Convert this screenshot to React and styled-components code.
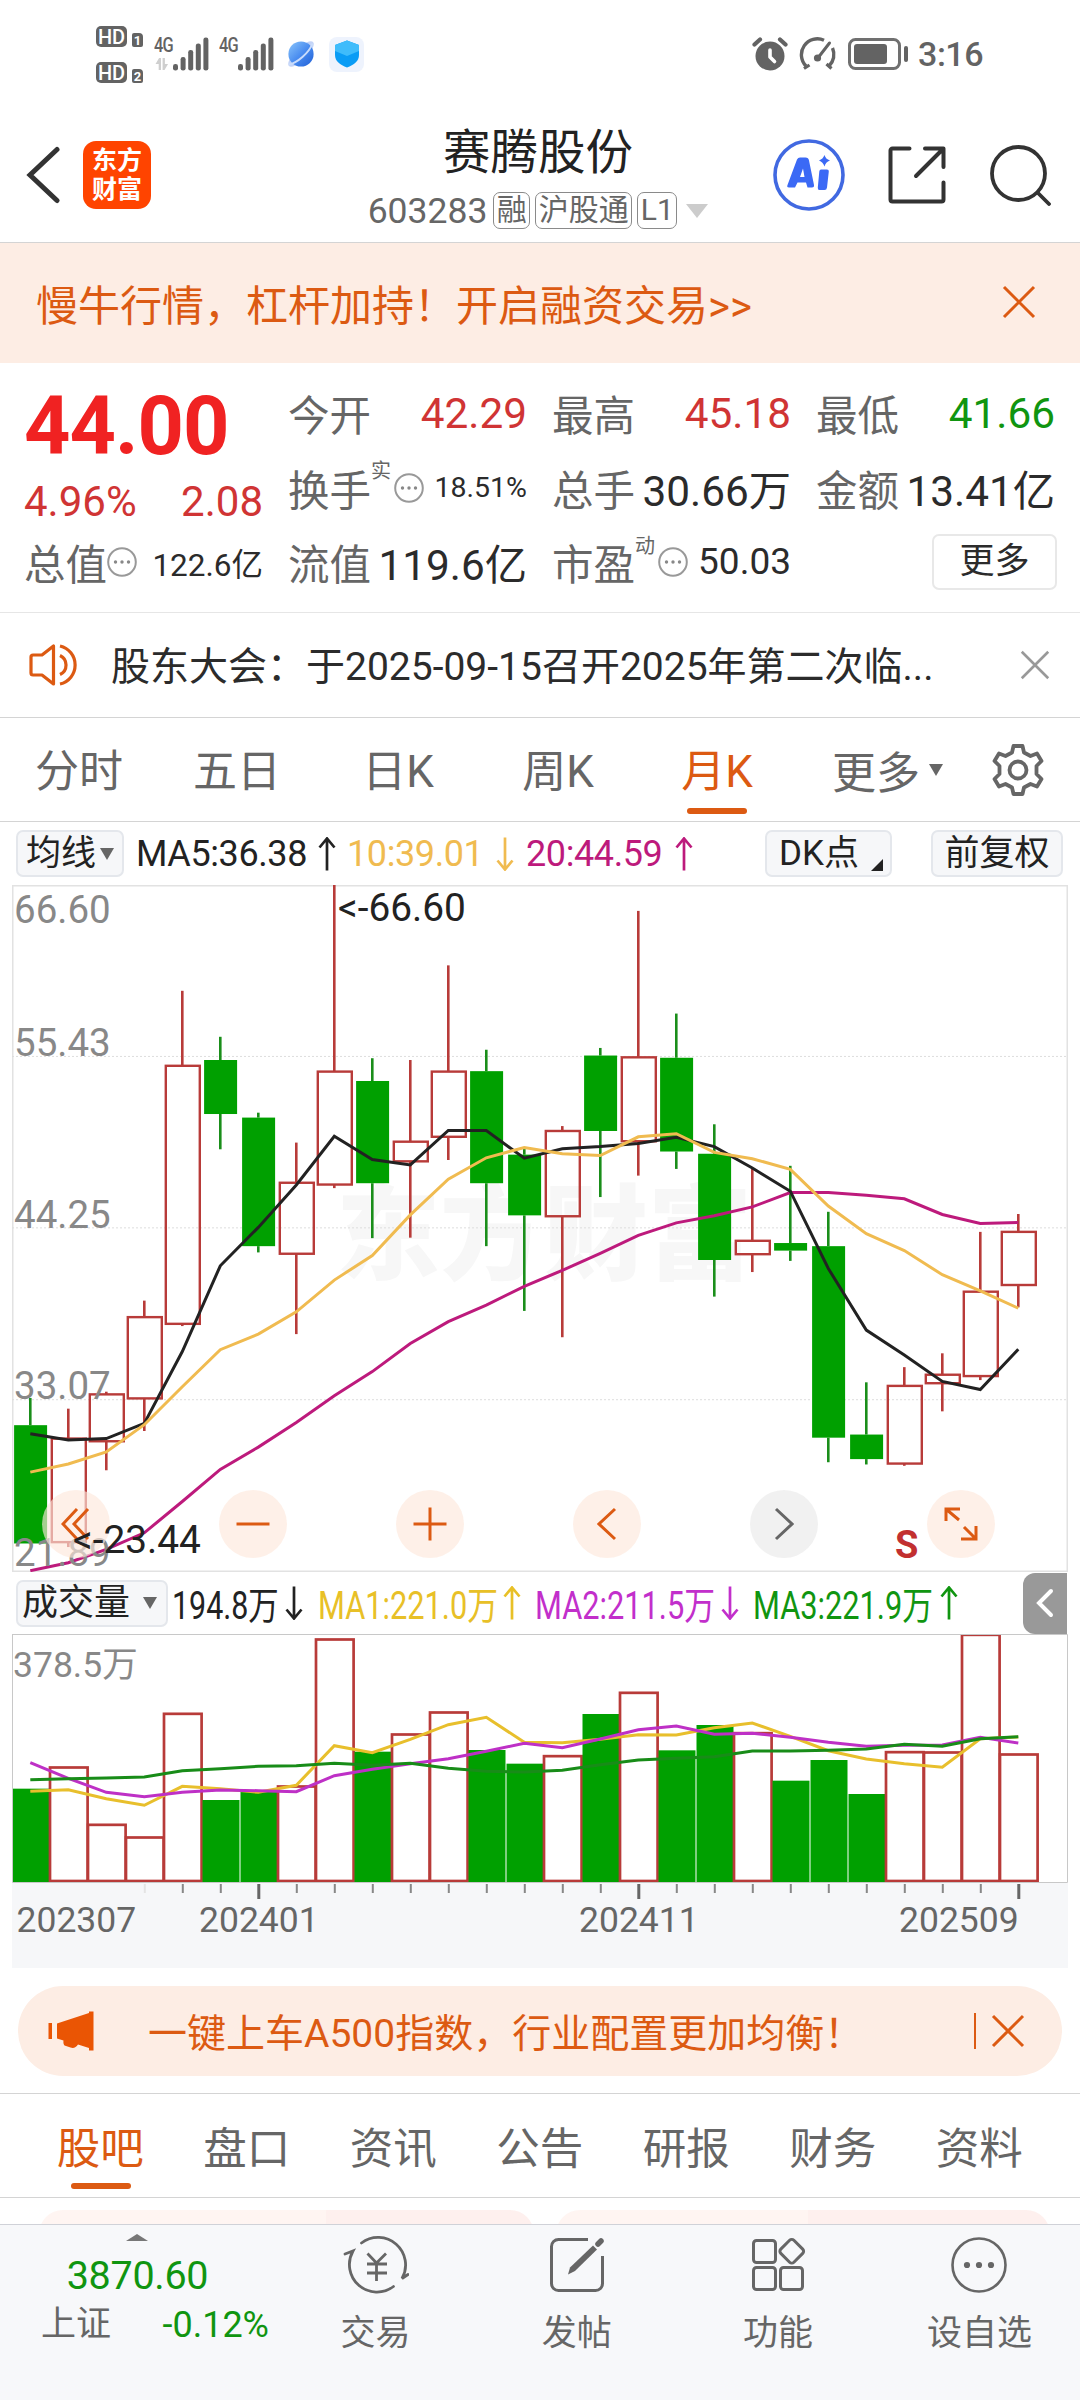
import React from 'react';
import styled, { createGlobalStyle } from 'styled-components';

const ORANGE = '#dc5a12';
const RED = '#d03434';
const GREEN = '#109510';
const GRAY = '#666';

const GlobalStyle = createGlobalStyle`
  * {
    box-sizing: border-box;
  }

  body {
    margin: 0;
    background: #fff;
    font-family: Roboto, "Noto Sans CJK SC", sans-serif;
    color: #2b2b2b;
  }

  svg {
    display: block;
    flex: none;
  }
`;

// x centre of the n-th monthly bar
const barX = (i) => 17.3 + i * 38;
const priceY = (v) => (v - 11) / 2.24;
const volumeY = (v) => (v - 222) / 3;

// [up, high, body top, body bottom, low]
const candles = [
  [0, 1160, 1221, 1486, 1486],
  [1, 1184, 1251, 1483, 1494],
  [1, 1146, 1152, 1257, 1322],
  [1, 942, 979, 1161, 1234],
  [1, 248, 416, 994, 999],
  [0, 351, 403, 524, 603],
  [0, 521, 532, 820, 834],
  [1, 588, 678, 837, 1017],
  [1, 11, 429, 682, 690],
  [0, 399, 450, 679, 802],
  [1, 403, 586, 630, 801],
  [1, 191, 429, 575, 627],
  [0, 380, 428, 679, 820],
  [0, 600, 615, 751, 965],
  [1, 551, 562, 753, 1024],
  [0, 376, 393, 562, 710],
  [1, 69, 397, 585, 662],
  [0, 299, 398, 608, 647],
  [0, 547, 613, 851, 933],
  [1, 645, 808, 838, 878],
  [0, 640, 813, 830, 853],
  [0, 743, 820, 1249, 1304],
  [0, 1125, 1242, 1297, 1309],
  [1, 1091, 1133, 1307, 1312],
  [1, 1060, 1108, 1127, 1190],
  [1, 788, 922, 1111, 1120],
  [1, 748, 788, 907, 957],
];

const ma5 = [1240, 1254, 1251, 1217, 1056, 864, 778, 683, 574, 626, 638, 561, 561, 623, 602, 597, 590, 576, 597, 645, 697, 870, 1008, 1064, 1123, 1141, 1051];
const ma10 = [1326, 1308, 1281, 1220, 1135, 1052, 1017, 967, 896, 841, 750, 670, 622, 599, 613, 617, 575, 568, 610, 624, 648, 730, 792, 830, 884, 920, 959];
const ma20 = [1547, 1529, 1499, 1462, 1392, 1320, 1270, 1215, 1155, 1101, 1038, 989, 952, 910, 874, 836, 796, 768, 752, 732, 700, 700, 706, 714, 749, 769, 767];

const volumes = [686, 621, 793, 831, 460, 720, 693, 678, 237, 575, 522, 456, 570, 611, 587, 462, 397, 571, 495, 518, 662, 600, 702, 575, 576, 223, 582];
const vma1 = [694, 689, 716, 736, 679, 686, 697, 676, 557, 578, 538, 494, 472, 547, 548, 538, 524, 525, 503, 489, 529, 572, 597, 611, 622, 536, 531];
const vma2 = [608, 655, 697, 710, 697, 690, 692, 695, 647, 628, 611, 596, 574, 550, 563, 537, 509, 498, 523, 520, 532, 547, 559, 556, 555, 532, 549];
const vma3 = [659, 656, 654, 651, 632, 626, 619, 617, 610, 616, 610, 625, 634, 636, 631, 614, 600, 595, 590, 573, 573, 571, 567, 553, 559, 536, 530];

const toPoints = (values, scale) =>
  values.map((v, i) => `${barX(i)},${scale(v).toFixed(1)}`).join(' ');

/* ---------- icons ---------- */

const Signal = () => (
  <svg width="36" height="34" viewBox="0 0 36 34" fill="#636363">
    <rect x="0" y="27" width="5" height="6.5" rx="2.3" />
    <rect x="7.6" y="20" width="5" height="13.5" rx="2.3" />
    <rect x="15.2" y="13" width="5" height="20.5" rx="2.3" />
    <rect x="22.8" y="6.5" width="5" height="27" rx="2.3" />
    <rect x="30.4" y="0.5" width="5" height="33" rx="2.3" />
  </svg>
);

const Planet = () => (
  <svg width="30" height="30" viewBox="0 0 30 30">
    <defs>
      <linearGradient id="planet" x1="0" y1="0" x2="1" y2="1">
        <stop offset="0" stopColor="#8cc6fb" />
        <stop offset="0.5" stopColor="#4a8df0" />
        <stop offset="1" stopColor="#1f5fd6" />
      </linearGradient>
    </defs>
    <ellipse cx="15" cy="15" rx="17" ry="6" fill="#c3d3f7" transform="rotate(-45 15 15)" />
    <circle cx="15" cy="15" r="12.6" fill="url(#planet)" />
    <path d="M3 25.5C11 24 23 14 26.5 4.5" fill="none" stroke="#c9dcfb" strokeWidth="2" />
  </svg>
);

const Shield = () => (
  <svg width="26" height="28" viewBox="0 0 26 28">
    <path d="M13 .5 25 5v10c0 6-5 10-12 12.500C6 25 1 21 1 15V5Z" fill="#0a9cf5" />
    <path d="M13 .5 25 5v6L13 16 1 11V5Z" fill="#3fbcfb" />
  </svg>
);

const Alarm = () => (
  <svg width="36" height="34" viewBox="0 0 36 34">
    <circle cx="18" cy="19" r="14.500" fill="#636363" />
    <path d="M2.500 7.500 8 2.500M33.500 7.500 28 2.500" stroke="#636363" strokeWidth="4.200" strokeLinecap="round" />
    <path d="M18 13v7l4.500 4.500" fill="none" stroke="#fff" strokeWidth="3.600" strokeLinecap="round" strokeLinejoin="round" />
  </svg>
);

const Gauge = () => (
  <svg width="38" height="34" viewBox="0 0 38 34" fill="none" stroke="#636363">
    <path d="M7 29A16 16 0 0 1 25 3.200" strokeWidth="3.400" />
    <path d="M33.500 11A16 16 0 0 1 30 29" strokeWidth="3.400" />
    <path d="M5 31.500 10.500 28M32.500 31.500 27.500 27" strokeWidth="3.200" />
    <path d="M18.500 21.500 30.500 6" strokeWidth="3" strokeLinecap="round" />
    <circle cx="18.500" cy="21" r="3.600" fill="#636363" stroke="none" />
  </svg>
);

const Battery = () => (
  <svg width="61" height="32" viewBox="0 0 61 32">
    <rect x="1.500" y="1.500" width="50" height="29" rx="6" fill="none" stroke="#707070" strokeWidth="3" />
    <rect x="6" y="6" width="33" height="20" rx="3" fill="#636363" />
    <rect x="56" y="8" width="4" height="16" rx="2" fill="#636363" />
  </svg>
);

const BackIcon = () => (
  <svg width="36" height="58" viewBox="0 0 36 58" fill="none" stroke="#333" strokeWidth="5">
    <path d="M32 3.500 5 29 32 54.500" strokeLinecap="round" strokeLinejoin="miter" />
  </svg>
);

const AiIcon = () => (
  <svg width="72" height="72" viewBox="0 0 72 72">
    <circle cx="36" cy="36" r="34" fill="none" stroke="#4169e1" strokeWidth="3.600" />
    <path
      fillRule="evenodd"
      d="M24 20.500Q25 18.500 27 18.500H32.500Q35.500 18.500 36 21.500L41 46Q41.300 48.500 39 48.500H34.500L33 43.500H24.500L22 48.500H16Q13.500 48.500 14.500 46ZM27 38H31.500L30 29.500Z"
      fill="#3b69f5"
    />
    <path d="M48 30.500H54Q56 30.500 55.800 32.500L54 48.500Q53.700 51 51.500 51H46.500Q44.500 51 44.800 48.500L46.300 32.500Q46.500 30.500 48 30.500Z" fill="#3b69f5" />
    <path d="M51.500 16Q52.500 20 57 21.500 52.500 23 51.500 27.500 50 23 46 21.500 50 20 51.500 16Z" fill="#3b69f5" />
  </svg>
);

const ShareIcon = () => (
  <svg width="60" height="60" viewBox="0 0 60 60" fill="none" stroke="#333" strokeWidth="4" strokeLinecap="round" strokeLinejoin="round">
    <path d="M22.500 3.500H5.500a2 2 0 0 0-2 2v49a2 2 0 0 0 2 2h49a2 2 0 0 0 2-2V37.500" />
    <path d="M38 3.500h18.500V22M55.500 4.500 29 31" />
  </svg>
);

const SearchIcon = () => (
  <svg width="62" height="62" viewBox="0 0 62 62" fill="none" stroke="#333" strokeWidth="3.800" strokeLinecap="round">
    <circle cx="29.500" cy="29.500" r="26.500" />
    <path d="m49 49 11 11" />
  </svg>
);

const CloseIcon = ({ size = 34, color = ORANGE, width = 3 }) => (
  <svg width={size} height={size} viewBox="0 0 34 34" fill="none" stroke={color} strokeWidth={width}>
    <path d="m2 2 30 30M32 2 2 32" />
  </svg>
);

const InfoDots = () => (
  <svg width="30" height="30" viewBox="0 0 30 30">
    <circle cx="15" cy="15" r="13.800" fill="none" stroke="#999" strokeWidth="2" />
    <g fill="#888">
      <circle cx="8.500" cy="15" r="1.700" />
      <circle cx="15" cy="15" r="1.700" />
      <circle cx="21.500" cy="15" r="1.700" />
    </g>
  </svg>
);

const SpeakerIcon = () => (
  <svg width="54" height="44" viewBox="0 0 54 44" fill="none" stroke={ORANGE} strokeWidth="3.200">
    <path d="M4 12H13L24.500 3V41L13 32H4Q2 32 2 30V14Q2 12 4 12Z" strokeLinejoin="round" />
    <path d="M31 12.500a10.500 10.500 0 0 1 0 19M31 3a19.500 19.500 0 0 1 0 38" />
  </svg>
);

const GearIcon = () => (
  <svg width="54" height="54" viewBox="0 0 54 54" fill="none" stroke={GRAY} strokeWidth="3.800" strokeLinejoin="round">
    <path d="M22.500 3H31.500L33 9.500 39.500 13 46 10.500 50.500 18 45.500 23V31L50.500 36 46 43.500 39.500 41 33 44.500 31.500 51H22.500L21 44.500 14.500 41 8 43.500 3.500 36 8.500 31V23L3.500 18 8 10.500 14.500 13 21 9.500Z" />
    <circle cx="27" cy="27" r="8.500" />
  </svg>
);

const Arrow = ({ down, color }) => (
  <ArrowSvg viewBox="0 0 18 34" stroke={color}>
    <path d={down ? 'M9 .5V32M1.500 23.500 9 32.500 16.500 23.500' : 'M9 33.5V2M1.500 10.500 9 1.500 16.500 10.500'} />
  </ArrowSvg>
);

const Horn = () => (
  <svg width="48" height="40" viewBox="0 0 48 40" fill="#ea5504">
    <rect x="0.500" y="12" width="3.500" height="16" />
    <path d="M9 12.500 41 2V0.500H45.500V39.500H41V37L30 33.500Q27 38 22.500 36.500L16.500 34.500Q15 33.500 15.500 29.500L9 27.500Z" />
  </svg>
);

const TradeIcon = () => (
  <svg width="66" height="60" viewBox="0 0 66 60" fill="none" stroke={GRAY} strokeWidth="2.800" strokeLinecap="round">
    <path d="M18.500 8A27.500 27.500 0 0 1 59 43.500L65 39.500" />
    <path d="M50.500 51.500A27.500 27.500 0 0 1 10 16L2 19" />
    <path d="M24.500 18.500 33.500 28 43 18.500M24 29H44M24 38H44M33.500 28V46" strokeLinecap="butt" />
  </svg>
);

const PostIcon = () => (
  <svg width="56" height="56" viewBox="0 0 56 56" fill="none" stroke={GRAY} strokeWidth="3">
    <path d="M39 2.500H9.500a7 7 0 0 0-7 7V46.500a7 7 0 0 0 7 7H46.500a7 7 0 0 0 7-7V19" />
    <path d="M19 37.500 21 30.500 44 8.500 48 12.500 26 34Z" fill={GRAY} stroke="none" />
    <path d="m49 7 3-3" strokeWidth="5.500" strokeLinecap="round" />
  </svg>
);

const FeatureIcon = () => (
  <svg width="56" height="56" viewBox="0 0 56 56" fill="none" stroke={GRAY} strokeWidth="3">
    <rect x="3.500" y="3.500" width="22" height="22" rx="3" />
    <rect x="3.500" y="30.500" width="22" height="22" rx="3" />
    <rect x="30.500" y="30.500" width="22" height="22" rx="3" />
    <rect x="32.500" y="5" width="18.500" height="18.500" rx="3" transform="rotate(45 41.750 14.250)" />
  </svg>
);

const MoreIcon = () => (
  <svg width="58" height="58" viewBox="0 0 58 58">
    <circle cx="29" cy="29" r="26.500" fill="none" stroke={GRAY} strokeWidth="2.600" />
    <g fill={GRAY}>
      <circle cx="17" cy="29" r="3.100" />
      <circle cx="29" cy="29" r="3.100" />
      <circle cx="41" cy="29" r="3.100" />
    </g>
  </svg>
);

/* ---------- page sections ---------- */

const StatusBar = () => (
  <Status>
    <HdColumn>
      {[1, 2].map((n) => (
        <HdRow key={n}>
          <HdBadge>HD</HdBadge>
          <SimBadge>{n}</SimBadge>
        </HdRow>
      ))}
    </HdColumn>
    <Network>
      <NetworkType>
        4G
        <svg width="20" height="12" viewBox="0 0 16 12" fill="#cfcfcf">
          <path d="M4.500 0H7v12H4V6H0ZM9 0h3v6h4l-4.500 6H9Z" />
        </svg>
      </NetworkType>
      <Signal />
    </Network>
    <Network>
      <NetworkType>4G</NetworkType>
      <Signal />
    </Network>
    <PlanetBox>
      <Planet />
    </PlanetBox>
    <ShieldTile>
      <Shield />
    </ShieldTile>
    <StatusRight>
      <Alarm />
      <Gauge />
      <Battery />
      <Clock>3:16</Clock>
    </StatusRight>
  </Status>
);

const Quote = () => (
  <QuoteGrid>
    <PriceBlock>
      <Price>44.00</Price>
      <Change>
        <span>4.96%</span>
        <span>2.08</span>
      </Change>
    </PriceBlock>
    <Cell>
      <Label>今开</Label>
      <Value $color={RED}>42.29</Value>
    </Cell>
    <Cell>
      <Label>最高</Label>
      <Value $color={RED}>45.18</Value>
    </Cell>
    <Cell>
      <Label>最低</Label>
      <Value $color={GREEN}>41.66</Value>
    </Cell>
    <Cell>
      <Label>换手</Label>
      <Sup>实</Sup>
      <InfoDots />
      <Value $size={28.5}>18.51%</Value>
    </Cell>
    <Cell>
      <Label>总手</Label>
      <Value>30.66万</Value>
    </Cell>
    <Cell>
      <Label>金额</Label>
      <Value>13.41亿</Value>
    </Cell>
    <Cell>
      <Label>总值</Label>
      <InfoDots />
      <Value $size={31.5}>122.6亿</Value>
    </Cell>
    <Cell>
      <Label>流值</Label>
      <Value>119.6亿</Value>
    </Cell>
    <Cell>
      <Label>市盈</Label>
      <Sup>动</Sup>
      <InfoDots />
      <Value $size={37}>50.03</Value>
    </Cell>
    <Cell>
      <MoreButton>更多</MoreButton>
    </Cell>
  </QuoteGrid>
);

const PriceChart = () => (
  <ChartFrame>
    <svg width="1056" height="687" viewBox="-1 0 1056 687">
      <text x="323" y="387" fontSize="104" fontWeight="900" fill="#f7f7f7">东方财富</text>
      {[395, 779, 1164].map((v) => (
        <line key={v} x1="-1" x2="1055" y1={priceY(v)} y2={priceY(v)} stroke="#ddd" strokeDasharray="2 2" />
      ))}
      {candles.map(([up, high, top, bottom, low], i) => {
        const x = barX(i);
        const y = priceY(top);
        const h = priceY(bottom) - y;
        const color = up ? '#b83b39' : '#1a8e1a';
        return (
          <g key={i}>
            <line x1={x} x2={x} y1={priceY(high)} y2={y} stroke={color} strokeWidth="2.600" />
            <line x1={x} x2={x} y1={y + h} y2={priceY(low)} stroke={color} strokeWidth="2.600" />
            {up ? (
              <rect x={x - 16.5} y={y} width="34" height={h} fill="none" stroke={color} strokeWidth="2.400" />
            ) : (
              <rect x={x - 16.2} y={y} width="33" height={h} fill="#00a000" />
            )}
          </g>
        );
      })}
      <g fill="none" strokeWidth="3">
        <polyline points={toPoints(ma20, priceY)} stroke="#bd1a7c" />
        <polyline points={toPoints(ma5, priceY)} stroke="#222" />
        <polyline points={toPoints(ma10, priceY)} stroke="#f0bb50" />
      </g>
      {[[66.6, 38], [55.43, 171], [44.25, 343], [33.07, 514], [21.89, 681]].map(([label, y]) => (
        <text key={y} x="1" y={y} fontSize="38.500" fill="#888">{label.toFixed(2)}</text>
      ))}
      <text x="325" y="36" fontSize="38.800" fill="#222">&lt;-66.60</text>
    </svg>
    <ChartButtons>
      <RoundButton>
        <svg width="30" height="34" viewBox="0 0 30 34">
          <path d="M16 2 2 17 16 32M27 2 13 17 27 32" />
        </svg>
      </RoundButton>
      <RoundButton>
        <svg width="34" height="34" viewBox="0 0 34 34">
          <path d="M.5 17h33" />
        </svg>
      </RoundButton>
      <RoundButton>
        <svg width="34" height="34" viewBox="0 0 34 34">
          <path d="M.5 17h33M17 .5v33" />
        </svg>
      </RoundButton>
      <RoundButton>
        <svg width="20" height="34" viewBox="0 0 20 34">
          <path d="M18 2 2 17 18 32" />
        </svg>
      </RoundButton>
      <RoundButton $muted>
        <svg width="20" height="34" viewBox="0 0 20 34">
          <path d="M2 2 18 17 2 32" />
        </svg>
      </RoundButton>
      <RoundButton>
        <svg width="34" height="34" viewBox="0 0 34 34">
          <path d="M2 14V2H16M2.500 2.500 15 13M20 20 31 31M32 19V32H17" />
        </svg>
      </RoundButton>
    </ChartButtons>
    <LowMark>&lt;-23.44</LowMark>
    <SellMark>S</SellMark>
  </ChartFrame>
);

const VolumeChart = () => (
  <VolumeFrame>
    <svg width="1056" height="334" viewBox="-1 0 1056 334">
      <rect x="-1" y="249" width="1056" height="85" fill="#f6f7f9" />
      <text x="0" y="43" fontSize="35.500" fill="#888">378.5万</text>
      {volumes.map((v, i) => {
        const x = barX(i);
        const y = volumeY(v);
        return candles[i][0] ? (
          <rect key={i} x={x - 18.3} y={y + 0.5} width="37.600" height={246.5 - y} fill="#fff" stroke="#b83b39" strokeWidth="2.700" />
        ) : (
          <rect key={i} x={x - 17.8} y={y} width="37" height={248 - y} fill="#00a000" />
        );
      })}
      <g fill="none" strokeWidth="3">
        <polyline points={toPoints(vma1, volumeY)} stroke="#e8bf2c" />
        <polyline points={toPoints(vma2, volumeY)} stroke="#be30c6" />
        <polyline points={toPoints(vma3, volumeY)} stroke="#188c18" />
      </g>
      <path d="M-1 .5H1054.500V248.500H-.5V0" fill="none" stroke="#c8c8c8" />
      {volumes.map((_, i) => {
        const major = i % 10 === 6;
        return i > 2 && (
          <rect key={i} x={barX(i) - 1 + (major ? 0 : 0.5)} y="250" width={major ? 3 : 2} height={major ? 15 : 9} fill={i === 3 ? '#e4e4e4' : major ? '#666' : '#888'} />
        );
      })}
      <g fontSize="35.500" fill={GRAY}>
        <text x="3.500" y="298">202307</text>
        <text x="186" y="298">202401</text>
        <text x="566" y="298">202411</text>
        <text x="886" y="298">202509</text>
      </g>
    </svg>
  </VolumeFrame>
);

const periods = [
  ['分时', 158],
  ['五日', 158],
  ['日K', 164],
  ['周K', 156],
  ['月K', 162],
];

const navItems = [
  ['交易', TradeIcon],
  ['发帖', PostIcon],
  ['功能', FeatureIcon],
  ['设自选', MoreIcon],
];

export default function App() {
  return (
    <Page>
      <GlobalStyle />
      <StatusBar />
      <Header>
        <BackIcon />
        <Logo>
          东方
          <br />
          财富
        </Logo>
        <TitleBlock>
          <Title>赛腾股份</Title>
          <CodeRow>
            603283
            <Tag $first>融</Tag>
            <Tag>沪股通</Tag>
            <Tag>L1</Tag>
            <Caret $w={23} $h={14} $color="#ccc" $left={9} />
          </CodeRow>
        </TitleBlock>
        <HeaderActions>
          <AiIcon />
          <ShareIcon />
          <SearchIcon />
        </HeaderActions>
      </Header>
      <Banner>
        慢牛行情，杠杆加持！开启融资交易&gt;&gt;
        <CloseIcon />
      </Banner>
      <Quote />
      <Notice>
        <SpeakerIcon />
        <NoticeText>股东大会：于2025-09-15召开2025年第二次临...</NoticeText>
        <CloseIcon size={30} color="#999" />
      </Notice>
      <PeriodTabs>
        {periods.map(([name, width]) => (
          <Period key={name} $width={width} $active={name === '月K'}>
            {name}
          </Period>
        ))}
        <MorePeriods>
          更多
          <Caret $w={15} $h={12} $color={GRAY} $left={9} />
        </MorePeriods>
        <GearIcon />
      </PeriodTabs>
      <MaRow>
        <Chip $width={108}>
          均线
          <Caret $w={15} $h={12} $color={GRAY} $left={4} />
        </Chip>
        <MaText $left={12} $width={182} $color="#222">MA5:36.38</MaText>
        <Arrow color="#222" />
        <MaText $left={11} $width={149} $color="#f0bb50">10:39.01</MaText>
        <Arrow down color="#f0bb50" />
        <MaText $left={12} $width={149} $color="#bd1a7c">20:44.59</MaText>
        <Arrow color="#bd1a7c" />
        <DkChip $width={127}>DK点</DkChip>
        <Chip $width={132}>前复权</Chip>
      </MaRow>
      <PriceChart />
      <VolumeHeader>
        <VolumeChip $width={152}>
          成交量
          <Caret $w={15} $h={12} $color={GRAY} $left={13} />
        </VolumeChip>
        <Narrow $left={4} $width={113} $scale={0.8} $color="#222"><span>194.8万</span></Narrow>
        <Arrow down color="#222" />
        <Narrow $left={15} $width={185} $scale={0.81} $color="#e8c027"><span>MA1:221.0万</span></Narrow>
        <Arrow color="#e8c027" />
        <Narrow $left={14} $width={186} $scale={0.81} $color="#c22fcb"><span>MA2:211.5万</span></Narrow>
        <Arrow down color="#c22fcb" />
        <Narrow $left={14} $width={187} $scale={0.81} $color={GREEN}><span>MA3:221.9万</span></Narrow>
        <Arrow color={GREEN} />
        <Drawer>
          <svg width="18" height="30" viewBox="0 0 18 30" fill="none" stroke="#fff" strokeWidth="4" strokeLinecap="round">
            <path d="M15 3 3 15 15 27" />
          </svg>
        </Drawer>
      </VolumeHeader>
      <VolumeChart />
      <Promo>
        <Horn />
        <PromoText>一键上车A500指数，行业配置更加均衡！</PromoText>
        <PromoClose>
          <CloseIcon />
        </PromoClose>
      </Promo>
      <InfoTabs>
        {['股吧', '盘口', '资讯', '公告', '研报', '财务', '资料'].map((name, i) => (
          <InfoTab key={name} $active={i === 0}>
            {name}
          </InfoTab>
        ))}
      </InfoTabs>
      <Cards>
        <Card $split={58} />
        <Card $split={51} />
      </Cards>
      <BottomNav>
        <IndexBlock>
          <IndexCaret />
          <IndexValue>3870.60</IndexValue>
          <IndexRow>
            <span>上证</span>
            <IndexChange>-0.12%</IndexChange>
          </IndexRow>
        </IndexBlock>
        {navItems.map(([name, Icon]) => (
          <NavItem key={name}>
            <IconBox>
              <Icon />
            </IconBox>
            {name}
          </NavItem>
        ))}
      </BottomNav>
    </Page>
  );
}

/* ---------- styles ---------- */

const Page = styled.div`
  width: 1080px;
  height: 2400px;
  overflow: hidden;
  display: flex;
  flex-direction: column;
  background: #fff;

  > * {
    flex: none;
  }
`;

const Status = styled.div`
  display: flex;
  align-items: center;
  height: 108px;
  padding: 0 97px 0 96px;
  color: #636363;
`;

const HdColumn = styled.div`
  display: flex;
  flex-direction: column;
  gap: 15px;
  width: 58px;
  margin-top: 1px;
`;

const HdRow = styled.div`
  display: flex;
  align-items: flex-end;
  gap: 5px;
`;

const HdBadge = styled.div`
  width: 31px;
  height: 21px;
  border-radius: 5px;
  background: #636363;
  color: #fff;
  font-size: 20px;
  font-weight: 500;
  line-height: 22px;
  text-align: center;
`;

const SimBadge = styled.div`
  width: 11px;
  height: 14px;
  border-radius: 2px 4px 2px 2px;
  background: #636363;
  color: #fff;
  font-size: 13px;
  font-weight: 700;
  line-height: 15px;
  text-align: center;
`;

const Network = styled.div`
  display: flex;
  width: 65px;
`;

const NetworkType = styled.div`
  width: 19px;
  height: 34px;
  font-size: 21px;
  font-weight: 500;
  line-height: 17px;
  letter-spacing: -1px;
  transform: scaleX(0.78);
  transform-origin: left;

  svg {
    margin-top: 4px;
  }
`;

const PlanetBox = styled.div`
  margin-left: 2px;
`;

const ShieldTile = styled.div`
  display: flex;
  align-items: center;
  justify-content: center;
  width: 35px;
  height: 35px;
  margin-left: 13px;
  border-radius: 8px;
  background: #eef3fd;
`;

const StatusRight = styled.div`
  display: flex;
  align-items: center;
  gap: 11px;
  margin-left: auto;
`;

const Clock = styled.div`
  font-size: 34px;
  font-weight: 500;
  margin-left: -2px;
  line-height: 40px;
  letter-spacing: -0.5px;
`;

const Header = styled.div`
  display: flex;
  align-items: center;
  height: 135px;
  padding: 0 29px 0 25px;
  border-bottom: 1px solid #d4d4d4;
`;

const Logo = styled.div`
  width: 68px;
  height: 68px;
  margin-left: 22px;
  padding-top: 5px;
  border-radius: 13px;
  background: #ff4400;
  color: #fff;
  font-size: 25px;
  font-weight: 700;
  line-height: 29px;
  text-align: center;
`;

const TitleBlock = styled.div`
  display: flex;
  flex-direction: column;
  align-items: center;
  width: 342px;
  margin: 9px 0 0 216px;
`;

const Title = styled.div`
  font-size: 47.5px;
  line-height: 62px;
  color: #222;
`;

const CodeRow = styled.div`
  display: flex;
  align-items: center;
  font-size: 35.5px;
  line-height: 54px;
  color: ${GRAY};
`;

const Tag = styled.span`
  height: 37px;
  margin-left: ${({ $first }) => ($first ? 6 : 5)}px;
  padding: 0 2.5px;
  border: 1.5px solid #8a8a8a;
  border-radius: 7px;
  font-size: 30px;
  line-height: 34px;
`;

const Caret = styled.span`
  width: 0;
  height: 0;
  margin-left: ${({ $left }) => $left}px;
  border: solid transparent;
  border-width: ${({ $w, $h }) => `${$h}px ${$w / 2}px 0`};
  border-top-color: ${({ $color }) => $color};
`;

const HeaderActions = styled.div`
  display: flex;
  align-items: center;
  gap: 42px;
  margin-left: auto;
`;

const Banner = styled.div`
  display: flex;
  align-items: center;
  justify-content: space-between;
  height: 120px;
  padding: 0 44px 2px 36px;
  background: #fdede4;
  color: ${ORANGE};
  font-size: 42px;
`;

const QuoteGrid = styled.div`
  display: grid;
  grid-template-columns: repeat(4, 239px);
  grid-template-rows: 74px 75px 73px;
  column-gap: 25px;
  height: 250px;
  padding: 13px 0 0 24px;
  border-bottom: 1px solid #e6e6e6;
`;

const PriceBlock = styled.div`
  grid-row: span 2;
`;

const Price = styled.div`
  margin-top: 7px;
  color: #f02222;
  font-size: 81px;
  font-weight: 700;
  line-height: 88px;
  letter-spacing: -1px;
`;

const Change = styled.div`
  display: flex;
  justify-content: space-between;
  margin-top: 9px;
  color: ${RED};
  font-size: 42px;
  line-height: 44px;
`;

const Cell = styled.div`
  display: flex;
  align-items: center;
`;

const Label = styled.span`
  color: ${GRAY};
  font-size: 41.5px;
`;

const Value = styled.span`
  margin-left: auto;
  color: ${({ $color }) => $color || '#2b2b2b'};
  font-size: ${({ $size }) => $size || 42.3}px;
`;

const Sup = styled.span`
  align-self: flex-start;
  width: 23px;
  margin-top: 5px;
  color: ${GRAY};
  font-size: 20px;
`;

const MoreButton = styled.div`
  width: 125px;
  height: 56px;
  margin: 0 -2px 0 auto;
  border: 2px solid #e8e8e8;
  border-radius: 7px;
  font-size: 35px;
  line-height: 51px;
  text-align: center;
`;

const Notice = styled.div`
  display: flex;
  align-items: center;
  height: 105px;
  padding: 0 30px 0 29px;
  border-bottom: 1px solid #d4d4d4;
`;

const NoticeText = styled.div`
  flex: 1;
  margin: -4px 0 0 28px;
  font-size: 39px;
`;

const PeriodTabs = styled.div`
  display: flex;
  align-items: center;
  height: 104px;
  border-bottom: 1px solid #d4d4d4;
  color: ${GRAY};
  font-size: 44px;
`;

const Period = styled.div`
  position: relative;
  width: ${({ $width }) => $width}px;
  height: 104px;
  color: ${({ $active }) => ($active ? ORANGE : GRAY)};
  text-align: center;
  line-height: 109px;

  &::after {
    content: ${({ $active }) => ($active ? '""' : 'none')};
    position: absolute;
    left: calc(50% - 30px);
    bottom: 8px;
    width: 60px;
    height: 6px;
    border-radius: 3px;
    background: ${ORANGE};
  }
`;

const MorePeriods = styled.div`
  display: flex;
  align-items: center;
  width: 159px;
  margin-left: 34px;
`;

const MaRow = styled.div`
  display: flex;
  align-items: center;
  height: 63px;
  padding: 0 17px 0 16px;
`;

const Chip = styled.div`
  display: flex;
  align-items: center;
  justify-content: center;
  flex: none;
  width: ${({ $width }) => $width}px;
  height: 47px;
  border: 2px solid #e4e7ec;
  border-radius: 7px;
  background: #f6f7f9;
  color: #222;
  font-size: 35px;
  line-height: 43px;
`;

const VolumeChip = styled(Chip)`
  justify-content: flex-start;
  padding-left: 4px;
  font-size: 36px;
`;

const DkChip = styled(Chip)`
  position: relative;
  justify-content: flex-start;
  margin: 0 39px 0 auto;
  padding-left: 12px;

  &::after {
    content: '';
    position: absolute;
    right: 7px;
    bottom: 4px;
    border: solid transparent;
    border-width: 0 0 12px 12px;
    border-bottom-color: #222;
  }
`;

const MaText = styled.div`
  width: ${({ $width }) => $width}px;
  margin-left: ${({ $left }) => $left}px;
  color: ${({ $color }) => $color};
  font-size: 36px;
  letter-spacing: -0.4px;
  white-space: nowrap;
`;

const ArrowSvg = styled.svg`
  width: 18px;
  height: 34px;
  fill: none;
  stroke-width: 2.7px;
`;

const ChartFrame = styled.div`
  position: relative;
  width: 1056px;
  height: 687px;
  margin-left: 12px;
  box-shadow: inset 0 0 0 1.5px #e2e2e2;
`;

const ChartButtons = styled.div`
  position: absolute;
  left: 30px;
  bottom: 14px;
  display: flex;
  gap: 109px;
`;

const RoundButton = styled.div`
  display: flex;
  align-items: center;
  justify-content: center;
  width: 68px;
  height: 68px;
  border-radius: 50%;
  background: ${({ $muted }) => ($muted ? 'rgba(235, 235, 235, 0.7)' : 'rgba(253, 232, 220, 0.65)')};

  svg {
    fill: none;
    stroke: ${({ $muted }) => ($muted ? GRAY : ORANGE)};
    stroke-width: 3;
  }
`;

const LowMark = styled.div`
  position: absolute;
  left: 61px;
  bottom: 9px;
  color: #222;
  font-size: 38.8px;
  line-height: 46px;
`;

const SellMark = styled.div`
  position: absolute;
  left: 883px;
  bottom: 4px;
  color: #c23030;
  font-size: 38px;
  font-weight: 700;
  line-height: 46px;
`;

const VolumeHeader = styled.div`
  display: flex;
  align-items: center;
  height: 62px;
  padding: 0 13px 0 16px;
`;

const Narrow = styled.div`
  width: ${({ $width }) => $width}px;
  margin: -2px 0 0 ${({ $left }) => $left}px;
  color: ${({ $color }) => $color};
  font-size: 38px;
  white-space: nowrap;

  span {
    display: inline-block;
    transform: scaleX(${({ $scale }) => $scale});
    transform-origin: left;
  }
`;

const Drawer = styled.div`
  display: flex;
  align-items: center;
  justify-content: center;
  width: 44px;
  height: 61px;
  margin-left: auto;
  border-radius: 12px 0 0 12px;
  background: #999;
`;

const VolumeFrame = styled.div`
  height: 334px;
  margin-left: 12px;
`;

const Promo = styled.div`
  display: flex;
  align-items: center;
  width: 1044px;
  height: 90px;
  margin: 18px 18px 17px;
  padding: 0 37px 0 30px;
  border-radius: 45px;
  background: #fdede4;
  color: ${ORANGE};
`;

const PromoText = styled.div`
  flex: 1;
  margin: -3px 0 0 52px;
  font-size: 39px;
`;

const PromoClose = styled.div`
  display: flex;
  align-items: center;
  height: 36px;
  padding-left: 15px;
  border-left: 2px solid ${ORANGE};
`;

const InfoTabs = styled.div`
  display: grid;
  grid-template-columns: repeat(7, 146.5px);
  height: 105px;
  padding-left: 27px;
  border: solid #d4d4d4;
  border-width: 1px 0;
`;

const InfoTab = styled.div`
  position: relative;
  height: 103px;
  color: ${({ $active }) => ($active ? ORANGE : GRAY)};
  font-size: 43.5px;
  line-height: 111px;
  text-align: center;

  &::after {
    content: ${({ $active }) => ($active ? '""' : 'none')};
    position: absolute;
    left: calc(50% - 29px);
    bottom: 8px;
    width: 60px;
    height: 6px;
    border-radius: 3px;
    background: ${ORANGE};
  }
`;

const Cards = styled.div`
  display: flex;
  gap: 22px;
  height: 26px;
  padding: 12px 30px 0 39px;
  overflow: hidden;
`;

const Card = styled.div`
  flex: 1;
  height: 60px;
  border-radius: 24px;
  background: ${({ $split }) => `linear-gradient(to right, #fff5f2 ${$split}%, #fef0ee ${$split}%)`};
`;

const BottomNav = styled.div`
  display: flex;
  height: 176px;
  border-top: 1px solid #d0d2d8;
  background: #f7f8fa;
`;

const IndexBlock = styled.div`
  display: flex;
  flex-direction: column;
  align-items: center;
  width: 275px;
`;

const IndexCaret = styled.div`
  margin-top: 9px;
  border: solid transparent;
  border-width: 0 11px 7px;
  border-bottom-color: #777;
`;

const IndexValue = styled.div`
  margin-top: 10px;
  color: ${GREEN};
  font-size: 39.5px;
  line-height: 49px;
  letter-spacing: -0.3px;
`;

const IndexRow = styled.div`
  display: flex;
  align-self: flex-start;
  justify-content: space-between;
  width: 228px;
  margin: 1px 0 0 41px;
  color: ${GRAY};
  font-size: 35px;
  line-height: 48px;
`;

const IndexChange = styled.span`
  color: ${GREEN};
  font-size: 36px;
`;

const NavItem = styled.div`
  display: flex;
  flex-direction: column;
  align-items: center;
  width: 201.3px;
  color: ${GRAY};
  font-size: 35px;
  line-height: 48px;
`;

const IconBox = styled.div`
  display: flex;
  align-items: center;
  height: 79px;
  margin-bottom: 6px;
`;
